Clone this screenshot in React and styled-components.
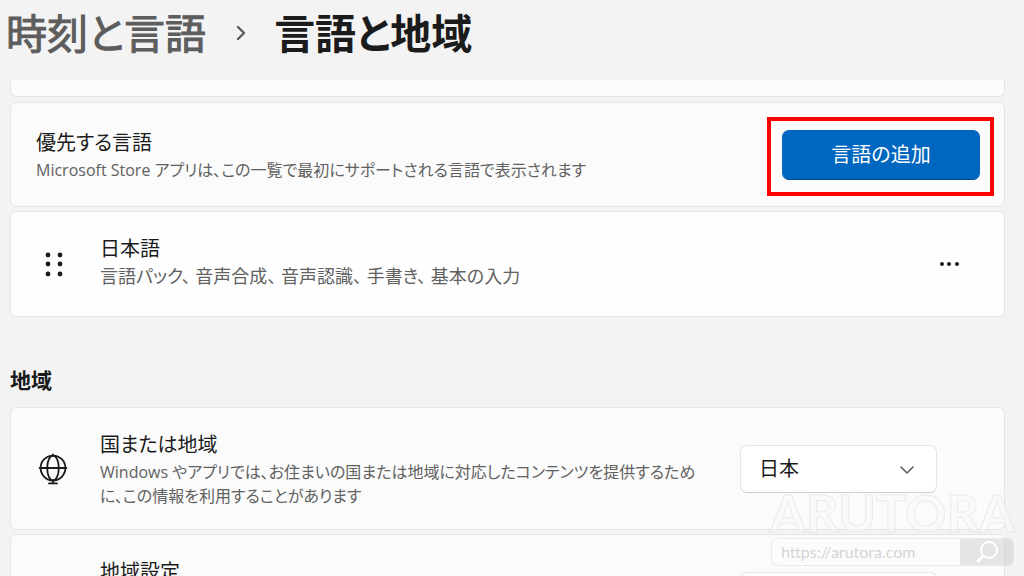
import styled, { createGlobalStyle } from "styled-components";

const colors = {
  page: "#f3f3f3",
  card: "#fbfbfb",
  cardRaised: "#fefefe",
  border: "#e5e5e5",
  text: "#1b1b1b",
  textMuted: "#616161",
  accent: "#0067c0",
  accentEdge: "#004a8c",
  highlight: "#fe0000",
};

const UI_FONT = `"Open Sans", "Noto Sans CJK JP", sans-serif`;

const GlobalStyle = createGlobalStyle`
  * {
    box-sizing: border-box;
  }

  body {
    margin: 0;
    background: ${colors.page};
    color: ${colors.text};
    font-family: ${UI_FONT};
    font-feature-settings: "palt";
    overflow: hidden;
  }

  h1, h2, h3, p {
    margin: 0;
  }
`;

const Page = styled.div`
  height: 100vh;
  display: flex;
  flex-direction: column;
  overflow: hidden;
`;

const Breadcrumb = styled.nav`
  display: flex;
  align-items: center;
  gap: 25px;
  height: 80px;
  padding: 0 6px 14px;
  flex-shrink: 0;
`;

const BreadcrumbLink = styled.a`
  color: #5d5d5d;
  font-size: 41px;
  font-weight: 400;
  line-height: 60px;
  text-decoration: none;
  -webkit-text-stroke: 1px #5d5d5d;
`;

const BreadcrumbCurrent = styled.h1`
  font-size: 41px;
  font-weight: 700;
  line-height: 60px;
`;

const Content = styled.main`
  flex: 1;
  min-height: 0;
  overflow: hidden;
  display: flex;
  flex-direction: column;
  padding: 0 19px 0 10px;
`;

const Card = styled.section`
  display: flex;
  align-items: center;
  flex-shrink: 0;
  min-height: ${(props) => props.$height || 106}px;
  margin-bottom: 4px;
  padding: 0 ${(props) => props.$end || 24}px 0 25px;
  background: ${(props) => (props.$raised ? colors.cardRaised : colors.card)};
  border: 1px solid ${colors.border};
  border-radius: 6px;
`;

const CardTail = styled.div`
  flex-shrink: 0;
  height: 17px;
  margin-bottom: 5px;
  background: ${colors.card};
  border: 1px solid ${colors.border};
  border-top: none;
  border-radius: 0 0 6px 6px;
`;

const CardIcon = styled.div`
  display: flex;
  width: 64px;
  flex-shrink: 0;
`;

const CardText = styled.div`
  flex: 1;
  min-width: 0;
  align-self: flex-start;
  padding-top: ${(props) => props.$top || 22}px;
  padding-right: 24px;
`;

const CardTitle = styled.h3`
  font-size: 20px;
  font-weight: 400;
  line-height: 30px;
`;

const CardDescription = styled.p`
  color: ${colors.textMuted};
  font-size: ${(props) => (props.$large ? 18 : 16)}px;
  line-height: 24px;
`;

const SectionTitle = styled.h2`
  margin: 43px 0 11px;
  font-size: 21px;
  font-weight: 700;
  line-height: 32px;
`;

const Highlight = styled.div`
  position: relative;
  display: flex;

  &::after {
    content: "";
    position: absolute;
    inset: -13px -14px -16px -15px;
    border: 4px solid ${colors.highlight};
    pointer-events: none;
  }
`;

const AccentButton = styled.button`
  width: 198px;
  height: 50px;
  padding: 0 0 2px;
  background: ${colors.accent};
  border: 1px solid ${colors.accent};
  border-bottom-color: ${colors.accentEdge};
  border-radius: 7px;
  color: #fff;
  font: inherit;
  font-size: 20px;
  font-feature-settings: inherit;
`;

const MoreButton = styled.button`
  display: flex;
  padding: 8px;
  background: none;
  border: none;
  color: ${colors.text};
`;

const SelectBox = styled.div`
  position: relative;
  display: flex;
  flex-shrink: 0;

  svg {
    position: absolute;
    top: 16px;
    right: 21px;
    pointer-events: none;
  }
`;

const Select = styled.select`
  appearance: none;
  width: 197px;
  height: 48px;
  padding: 0 48px 0 18px;
  background: #fff;
  border: 1px solid ${colors.border};
  border-bottom-color: #cfcfcf;
  border-radius: 7px;
  color: ${colors.text};
  font: inherit;
  font-size: 20px;
`;

const Watermark = styled.aside`
  position: absolute;
  right: 10px;
  bottom: 10px;
  width: 243px;
  pointer-events: none;
`;

const WatermarkName = styled.div`
  display: flex;
  justify-content: center;
  color: #fafafa;
  opacity: 0.6;
  -webkit-text-stroke: 1px #e2e2e2;
  font-family: Lato, sans-serif;
  font-size: 51px;
  font-weight: 700;
  line-height: 50px;
  white-space: nowrap;
`;

const WatermarkBar = styled.div`
  display: flex;
  height: 28px;
  border: 1px solid rgba(0, 0, 0, 0.07);
  border-radius: 6px;
  background: rgba(255, 255, 255, 0.3);
  overflow: hidden;
`;

const WatermarkUrl = styled.span`
  flex: 1;
  padding-left: 9px;
  color: #d4d4d4;
  font-family: Lato, sans-serif;
  font-size: 16px;
  line-height: 26px;
`;

const WatermarkSearch = styled.span`
  display: flex;
  align-items: center;
  justify-content: center;
  width: 53px;
  background: rgba(0, 0, 0, 0.09);
`;

function Chevron({ direction, size, color, weight = 1.6 }) {
  const points = direction === "right" ? "7,3 13,9 7,15" : "3,6 9,12 15,6";
  return (
    <svg width={size} height={size} viewBox="0 0 18 18" aria-hidden="true">
      <polyline
        points={points}
        fill="none"
        stroke={color}
        strokeWidth={weight}
        strokeLinecap="round"
        strokeLinejoin="round"
      />
    </svg>
  );
}

function DragHandle() {
  return (
    <svg width="36" height="36" viewBox="0 0 36 36" aria-hidden="true">
      {[9, 18, 28].map((y) =>
        [12, 24].map((x) => (
          <circle key={`${x}-${y}`} cx={x} cy={y} r="2.4" fill={colors.text} />
        ))
      )}
    </svg>
  );
}

function Globe() {
  return (
    <svg
      width="34"
      height="34"
      viewBox="0 0 34 34"
      fill="none"
      stroke={colors.text}
      strokeWidth="1.8"
      strokeLinecap="round"
      aria-hidden="true"
    >
      <circle cx="17" cy="16" r="12.4" />
      <ellipse cx="17" cy="16" rx="5.8" ry="12.4" />
      <path d="M3.6 16h26.8M17 2.4v1M17 28.5v3M13 31.4h8" />
    </svg>
  );
}

function RegionSelect({ label, value }) {
  return (
    <SelectBox>
      <Select aria-label={label} defaultValue={value}>
        <option>{value}</option>
      </Select>
      <Chevron size={18} color="#5d5d5d" />
    </SelectBox>
  );
}

function App() {
  return (
    <Page>
      <GlobalStyle />
      <Breadcrumb>
        <BreadcrumbLink href="#time">時刻と言語</BreadcrumbLink>
        <Chevron direction="right" size={18} color="#5d5d5d" weight={2.4} />
        <BreadcrumbCurrent>言語と地域</BreadcrumbCurrent>
      </Breadcrumb>
      <Content>
        <CardTail />
        <Card $height={105}>
          <CardText $top={25}>
            <CardTitle>優先する言語</CardTitle>
            <CardDescription>
              Microsoft Store アプリは、この一覧で最初にサポートされる言語で表示されます
            </CardDescription>
          </CardText>
          <Highlight>
            <AccentButton type="button">言語の追加</AccentButton>
          </Highlight>
        </Card>
        <Card $raised $end={36}>
          <CardIcon>
            <DragHandle />
          </CardIcon>
          <CardText>
            <CardTitle>日本語</CardTitle>
            <CardDescription $large>
              言語パック、 音声合成、 音声認識、 手書き、 基本の入力
            </CardDescription>
          </CardText>
          <MoreButton type="button" aria-label="その他">
            <svg width="22" height="22" viewBox="0 0 22 22">
              {[4, 11, 19].map((x) => (
                <circle key={x} cx={x} cy="11" r="2" fill="currentColor" />
              ))}
            </svg>
          </MoreButton>
        </Card>
        <SectionTitle>地域</SectionTitle>
        <Card $height={123} $end={67}>
          <CardIcon>
            <Globe />
          </CardIcon>
          <CardText>
            <CardTitle>国または地域</CardTitle>
            <CardDescription>
              Windows やアプリでは、お住まいの国または地域に対応したコンテンツを提供するために、この情報を利用することがあります
            </CardDescription>
          </CardText>
          <RegionSelect label="国または地域" value="日本" />
        </Card>
        <Card $height={123} $end={67}>
          <CardIcon />
          <CardText>
            <CardTitle>地域設定</CardTitle>
          </CardText>
          <RegionSelect label="地域設定" value="推奨" />
        </Card>
      </Content>
      <Watermark>
        <WatermarkName>ARUTORA</WatermarkName>
        <WatermarkBar>
          <WatermarkUrl>https://arutora.com</WatermarkUrl>
          <WatermarkSearch>
            <svg
              width="24"
              height="24"
              viewBox="0 0 24 24"
              fill="none"
              stroke="#fff"
              strokeWidth="2"
              strokeLinecap="round"
            >
              <circle cx="14" cy="10" r="8" />
              <path d="M8 16l-5 5" strokeWidth="3" />
            </svg>
          </WatermarkSearch>
        </WatermarkBar>
      </Watermark>
    </Page>
  );
}

export default App;
